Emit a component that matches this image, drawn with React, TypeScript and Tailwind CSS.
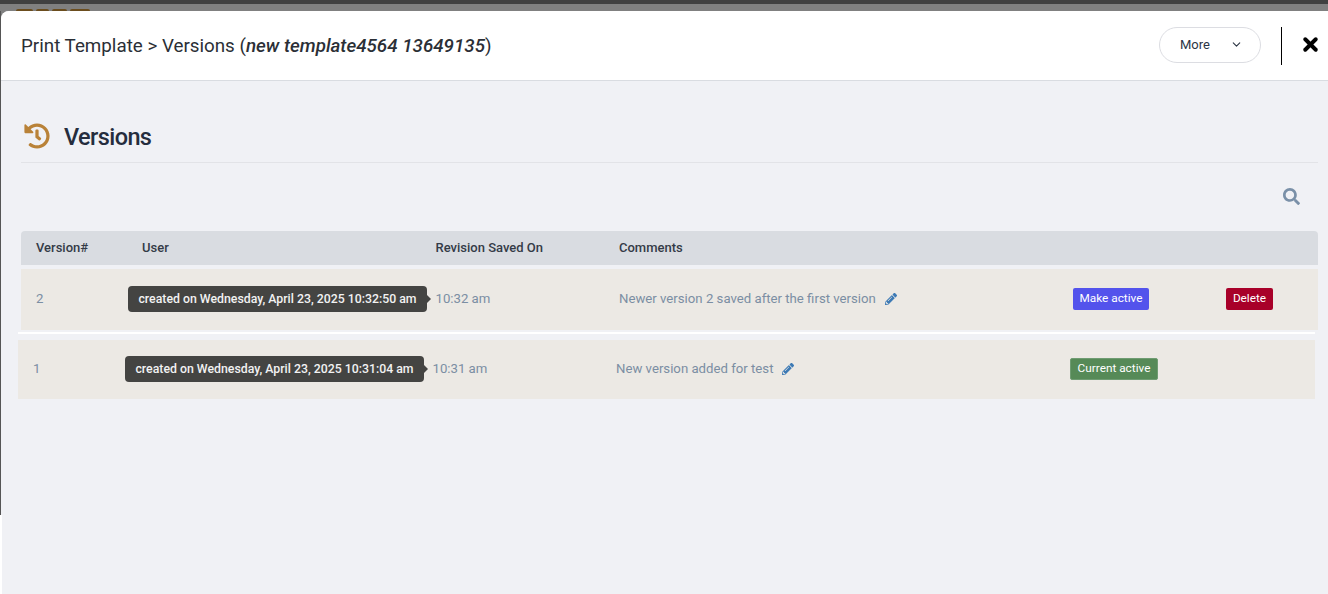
import React from "react";
import { ChevronDown, X } from "lucide-react";
import { FaHistory, FaPencilAlt, FaSearch } from "react-icons/fa";

const font = "font-['Roboto','Liberation_Sans',sans-serif]";
const gridCols = "grid grid-cols-[106px_293.5px_183.5px_454px_153px_1fr] items-center";

function Tip({ text }: { text: string }) {
  return (
    <div className="absolute left-[-14px] top-1/2 -translate-y-1/2 h-[26px] w-[299px] pt-[1px] flex items-center justify-center rounded-[4px] bg-[#444442] text-[12.3px] font-medium text-[#f2f2f2] whitespace-nowrap">
      {text}
      <span className="absolute right-[-4px] top-1/2 -translate-y-1/2 border-y-[4px] border-l-[4px] border-y-transparent border-l-[#444442]"></span>
    </div>
  );
}

function Row({
  num,
  tip,
  time,
  comment,
  action,
  showDelete,
  className,
}: {
  num: string;
  tip: string;
  time: string;
  comment: string;
  action: React.ReactNode;
  showDelete?: boolean;
  className: string;
}) {
  return (
    <div className={`${gridCols} bg-[#ece9e4] pl-[15px] pb-[2px] text-[13.2px] text-[#7b8ea3] ${className}`}>
      <div>{num}</div>
      <div className="relative h-[18px]">
        <Tip text={tip} />
      </div>
      <div>{time}</div>
      <div className="flex items-center gap-[9px]">
        {comment}
        <FaPencilAlt className="mt-[1px] text-[#3d7ab5] text-[12px]" />
      </div>
      <div>{action}</div>
      <div>
        {showDelete && (
          <button className="h-[22px] w-[47px] pt-[1px] rounded-[2px] bg-[#a80029] text-[11.8px] text-white">
            Delete
          </button>
        )}
      </div>
    </div>
  );
}

export default function App() {
  return (
    <div className={`${font} w-[1328px] h-[594px] overflow-hidden flex flex-col bg-[#808080]`}>
      <div className="h-[4px] bg-[#404040]"></div>
      <div className="h-[7px] flex items-end gap-[3px] pl-[16px]">
        <div className="h-[2px] w-[17px] rounded-t bg-[#6b4d1e]"></div>
        <div className="h-[2px] w-[13px] rounded-t bg-[#6b4d1e]"></div>
        <div className="h-[2px] w-[15px] rounded-t bg-[#6b4d1e]"></div>
        <div className="h-[2px] w-[20px] rounded-t bg-[#6b4d1e]"></div>
      </div>
      <div className="flex-1 flex min-h-0">
        <div className="w-[1px] flex flex-col">
          <div className="h-[504px] bg-[#555555]"></div>
          <div className="flex-1 bg-white"></div>
        </div>
        <div className="relative flex-1 flex flex-col rounded-tl-[8px] overflow-hidden bg-[#f0f1f5]">
          <div className="h-[70px] shrink-0 bg-white border-b border-[#d9dce1] flex items-center pl-[20px] pr-[7px]">
            <div className="pt-[2px] text-[18.8px] text-[#2b2f36] flex-1">
              Print Template &gt; Versions (<i className="font-medium">new template4564 13649135</i>)
            </div>
            <button className="-mt-[2px] h-[36px] w-[102px] rounded-full border border-[#dcdde2] flex items-center justify-between pl-[20px] pr-[17px] text-[13px] text-[#2b3544]">
              More
              <ChevronDown size={13} strokeWidth={2} />
            </button>
            <div className="ml-[20px] h-[38px] w-px bg-black"></div>
            <X size={21} strokeWidth={4.5} className="-mt-[2px] ml-[18px] text-black" />
          </div>

          <div className="pl-[17px] pr-[10px]">
            <div className="ml-[3px] mt-[36px] h-[46px] flex items-center border-b border-[#e2e3e7] pb-[5px]">
              <FaHistory className="ml-[3px] -mt-[2px] text-[#b98238] text-[26px]" />
              <h1 className="ml-[14px] mt-[2px] text-[23.5px] font-medium tracking-[-0.6px] text-[#252d3d]">Versions</h1>
            </div>

            <div className="flex justify-end pr-[18px] pt-[25px] h-[68px]">
              <FaSearch className="text-[#7a90a8] text-[17px]" />
            </div>

            <div className={`${gridCols} ml-[3px] h-[34px] pl-[15px] rounded-t-[4px] bg-[#d9dce1] text-[13px] font-medium text-[#343b47]`}>
              <div>Version#</div>
              <div>User</div>
              <div>Revision Saved On</div>
              <div>Comments</div>
            </div>

            <Row
              className="ml-[3px] mt-[4px] h-[61px]"
              num="2"
              tip="created on Wednesday, April 23, 2025 10:32:50 am"
              time="10:32 am"
              comment="Newer version 2 saved after the first version"
              showDelete
              action={
                <button className="h-[22px] w-[76px] pt-[1px] rounded-[2px] bg-[#5353ec] text-[11.8px] text-white">
                  Make active
                </button>
              }
            />
            <div className="mt-[2px] mr-[3px] h-[2px] bg-white"></div>
            <Row
              className="mt-[6px] mr-[3px] h-[59px]"
              num="1"
              tip="created on Wednesday, April 23, 2025 10:31:04 am"
              time="10:31 am"
              comment="New version added for test"
              action={
                <button className="h-[22px] w-[88px] pt-[1px] rounded-[2px] border border-[#6f9c72] bg-[#568a57] text-[11.8px] text-white">
                  Current active
                </button>
              }
            />
          </div>
          <div className="absolute left-0 bottom-0 h-[79px] w-px bg-white"></div>
        </div>
      </div>
    </div>
  );
}
